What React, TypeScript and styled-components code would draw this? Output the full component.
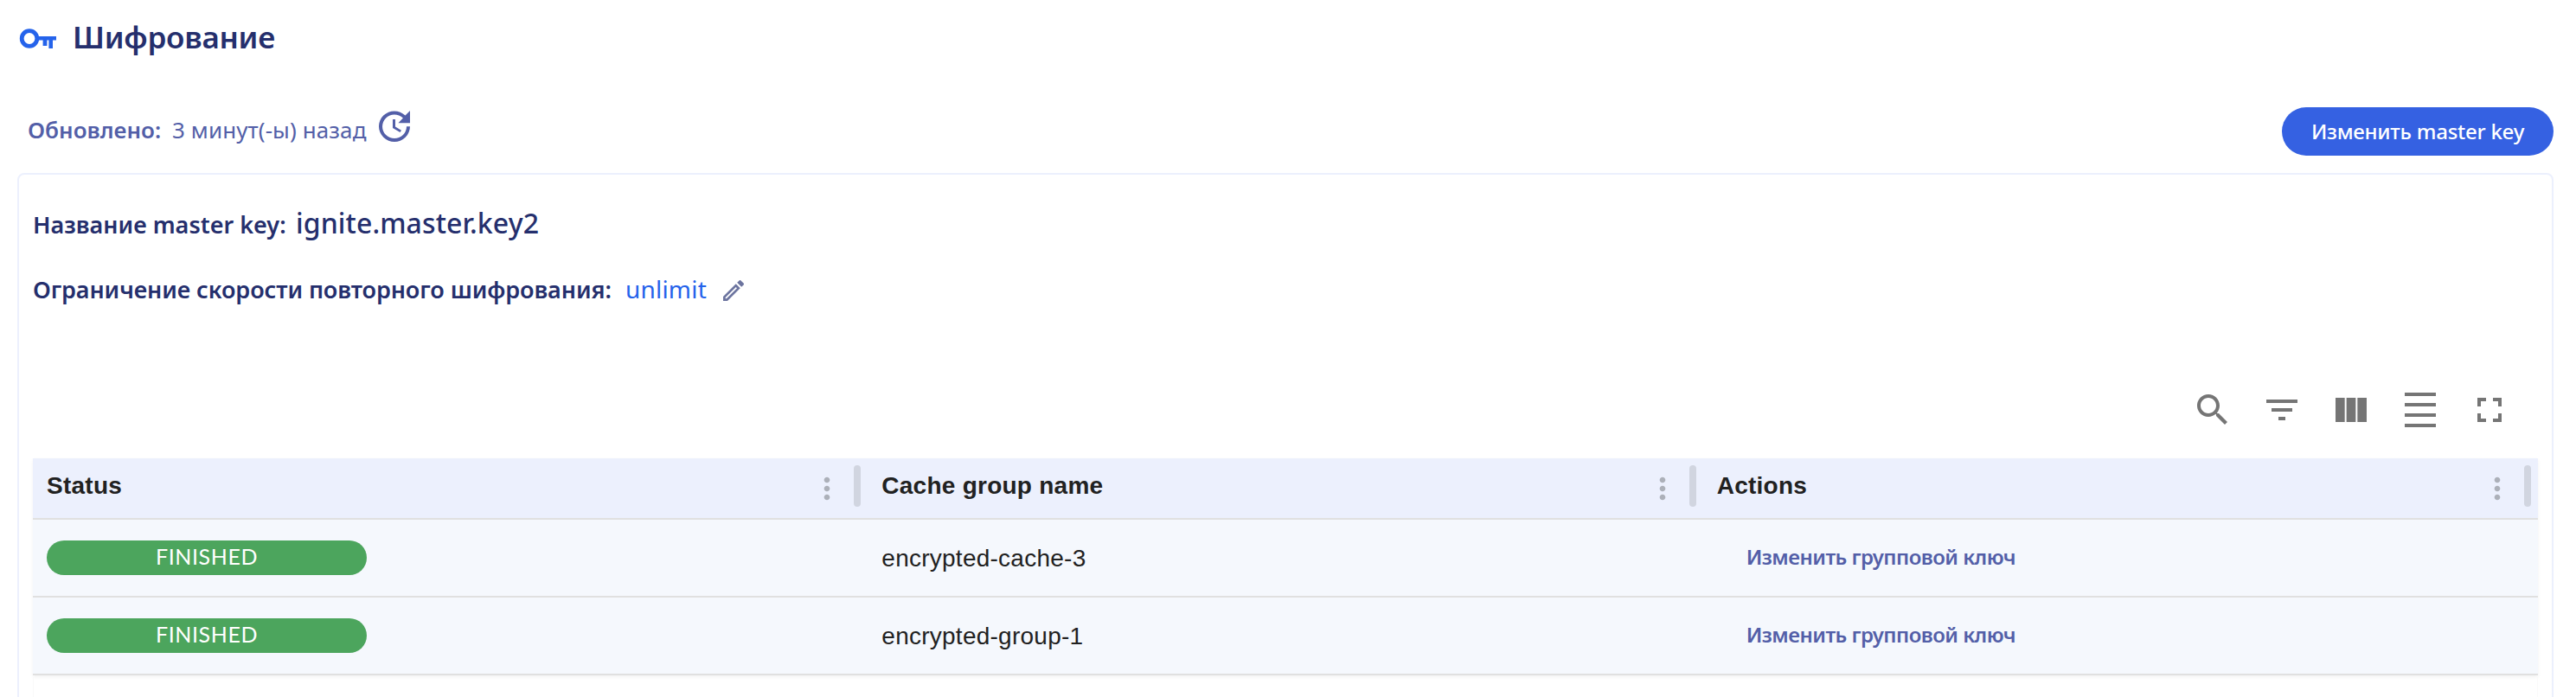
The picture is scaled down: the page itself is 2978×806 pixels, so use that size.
import React from "react";
import styled, { createGlobalStyle } from "styled-components";

const GlobalStyle = createGlobalStyle`
  *, *::before, *::after { box-sizing: border-box; }
  html, body { margin: 0; padding: 0; background: #fff; overflow: hidden; }
  svg { display: block; flex: none; }
`;

const navy = "#252f6d";
const slate = "#535fa8";
const brand = "'Noto Sans', 'Open Sans', sans-serif";

const Page = styled.main`
  display: flex;
  flex-direction: column;
  width: 2978px;
  height: 806px;
  overflow: hidden;
  padding: 0 26px 0 20px;
  font-family: ${brand};
`;

const TitleBar = styled.header`
  display: flex;
  flex: none;
  align-items: center;
  gap: 17px;
  height: 88px;
  padding-left: 2px;
`;

const Title = styled.h1`
  margin: 0 0 2px;
  font-size: 35px;
  font-weight: 600;
  line-height: 48px;
  letter-spacing: -0.25px;
  color: ${navy};
`;

const StatusBar = styled.div`
  display: flex;
  flex: none;
  justify-content: space-between;
  height: 112px;
  padding: 30px 0 0 12px;
`;

const Updated = styled.div`
  display: flex;
  height: 64px;
  line-height: 65px;
  font-size: 26px;
  color: ${slate};
`;

const UpdatedLabel = styled.span`
  width: 167px;
  font-weight: 600;
`;

const UpdatedValue = styled.span`
  width: 233px;
  letter-spacing: 0.1px;
`;

const UpdatedIcon = styled.span`
  padding-top: 4px;
`;

const PrimaryButton = styled.button`
  width: 314px;
  height: 56px;
  margin: 6px 0 0;
  padding: 0;
  border: 0;
  border-radius: 28px;
  background: #3561e2;
  color: #fff;
  font: 500 24px / 56px ${brand};
  letter-spacing: -0.25px;
`;

const Panel = styled.section`
  flex: 1 0 640px;
  display: flex;
  flex-direction: column;
  padding: 0 16px;
  border: 2px solid #ecf0fd;
  border-radius: 8px;
`;

const Property = styled.div<{ $top: number }>`
  display: flex;
  align-items: baseline;
  height: 48px;
  margin-top: ${(p) => p.$top}px;
  line-height: 48px;
  color: ${navy};
`;

const PropertyLabel = styled.span<{ $width: number; $tight?: boolean }>`
  width: ${(p) => p.$width}px;
  white-space: nowrap;
  font-size: 27px;
  font-weight: 600;
  letter-spacing: ${(p) => (p.$tight ? -0.1 : 0)}px;
`;

const KeyName = styled.span`
  font-size: 32px;
  font-weight: 500;
  letter-spacing: 0.1px;
`;

const Limit = styled.span`
  width: 109px;
  font-size: 28px;
  letter-spacing: 0.2px;
  color: #2563eb;
`;

const EditButton = styled.span`
  align-self: flex-start;
  padding-top: 10px;
`;

const Toolbar = styled.div`
  display: flex;
  justify-content: flex-end;
  gap: 32px;
  height: 80px;
  margin-top: 92px;
  padding-right: 32px;
`;

const Table = styled.div`
  display: flex;
  flex-direction: column;
  font-family: "Liberation Sans", Helvetica, Arial, sans-serif;
  font-size: 28px;
  color: #212121;
  box-shadow: 0 2px 4px rgba(0, 0, 0, 0.05);
`;

const HeadRow = styled.div`
  display: grid;
  grid-template-columns: repeat(3, 1fr);
  height: 71px;
  background: #ecf0fd;
  border-bottom: 2px solid #e0e0e0;
`;

const HeadCell = styled.div`
  display: flex;
  padding: 8px 8px 0 16px;
`;

const HeadText = styled.span`
  flex: 1;
  font-weight: 700;
  line-height: 48px;
  letter-spacing: 0.25px;
`;

const Grip = styled.span`
  width: 8px;
  height: 48px;
  margin-left: 7px;
  border-radius: 4px;
  background: #d1d5e0;
`;

const Row = styled.div`
  display: grid;
  grid-template-columns: repeat(3, 1fr);
  align-items: center;
  height: 90px;
  background: #f5f8fd;
  border-bottom: 2px solid #e0e0e0;
`;

const Cell = styled.div<{ $indent?: boolean }>`
  padding-left: ${(p) => (p.$indent ? 50 : 16)}px;
  line-height: 40px;
`;

const CacheName = styled.span`
  position: relative;
  top: 1px;
  letter-spacing: 0.25px;
`;

const StatusPill = styled.div`
  width: 370px;
  height: 40px;
  border-radius: 20px;
  background: #4ca55d;
  color: #fff;
  font: 400 25px / 36px Lato, ${brand};
  letter-spacing: 0.6px;
  text-align: center;
`;

const LinkButton = styled.span`
  display: block;
  padding-bottom: 3px;
  font: 600 24px / 38px ${brand};
  letter-spacing: -0.55px;
  color: ${slate};
`;

const Footer = styled.div`
  flex: 1;
  border: solid #fafafa;
  border-width: 0 1px;
`;

const KeyIcon = () => (
  <svg width="45" height="28" viewBox="0 0 45 28">
    <circle cx="12" cy="14.5" r="8.8" fill="none" stroke="#2563eb" strokeWidth="4.8" />
    <path d="M21 12h22v4.4h-4v9.6h-4.6v-9.6h-2v6.5h-4.8v-6.5H21z" fill="#2563eb" />
  </svg>
);

const paths = {
  update:
    "M21 10.12h-6.78l2.74-2.82c-2.73-2.7-7.15-2.8-9.88-.1-2.73 2.71-2.73 7.08 0 9.79s7.15 2.71 9.88 0C18.32 15.65 19 14.08 19 12.1h2c0 1.98-.88 4.55-2.64 6.29-3.51 3.48-9.21 3.48-12.72 0-3.5-3.47-3.53-9.11-.02-12.58s9.14-3.47 12.65 0L21 3v7.12zM12.5 8v4.25l3.5 2.08-.72 1.21L11 13V8h1.5z",
  edit:
    "m14.06 9.02.92.92L5.92 19H5v-.92l9.06-9.06M17.66 3c-.25 0-.51.1-.7.29l-1.83 1.83 3.75 3.75 1.83-1.83c.39-.39.39-1.02 0-1.41l-2.34-2.34c-.2-.2-.45-.29-.71-.29zm-3.6 3.19L3 17.25V21h3.75L17.81 9.94l-3.75-3.75z",
  search:
    "M15.5 14h-.79l-.28-.27C15.41 12.59 16 11.11 16 9.5 16 5.91 13.09 3 9.5 3S3 5.91 3 9.5 5.91 16 9.5 16c1.61 0 3.09-.59 4.23-1.57l.27.28v.79l5 4.99L20.49 19l-4.99-5zm-6 0C7.01 14 5 11.99 5 9.5S7.01 5 9.5 5 14 7.01 14 9.5 11.99 14 9.5 14z",
  filter: "M10 18h4v-2h-4v2zM3 6v2h18V6H3zm3 7h12v-2H6v2z",
  columns:
    "M14.67 5v14H9.33V5h5.34zm1 14H21V5h-5.33v14zm-7.34 0V5H3v14h5.33z",
  density: "M3 2h18v2H3zm0 18h18v2H3zm0-6h18v2H3zm0-6h18v2H3z",
  fullscreen:
    "M7 14H5v5h5v-2H7v-3zm-2-4h2V7h3V5H5v5zm12 7h-3v2h5v-5h-2v3zM14 5v2h3v3h2V5h-5z",
  more:
    "M12 8c1.1 0 2-.9 2-2s-.9-2-2-2-2 .9-2 2 .9 2 2 2zm0 2c-1.1 0-2 .9-2 2s.9 2 2 2 2-.9 2-2-.9-2-2-2zm0 6c-1.1 0-2 .9-2 2s.9 2 2 2 2-.9 2-2-.9-2-2-2z",
};

const Icon = ({
  name,
  size = 48,
  color = "#757575",
}: {
  name: keyof typeof paths;
  size?: number;
  color?: string;
}) => (
  <svg width={size} height={size} viewBox="0 0 24 24" fill={color}>
    <path d={paths[name]} />
  </svg>
);

const columns = ["Status", "Cache group name", "Actions"];
const groups = ["encrypted-cache-3", "encrypted-group-1"];
const tools = ["search", "filter", "columns", "density", "fullscreen"] as const;

const MoreBox = styled.span`
  width: 40px;
  padding-top: 7px;
  margin-right: 4px;
`;

export default function App() {
  return (
    <Page>
      <GlobalStyle />
      <TitleBar>
        <KeyIcon />
        <Title>Шифрование</Title>
      </TitleBar>
      <StatusBar>
        <Updated>
          <UpdatedLabel>Обновлено:</UpdatedLabel>
          <UpdatedValue>3 минут(-ы) назад</UpdatedValue>
          <UpdatedIcon>
            <Icon name="update" color={slate} />
          </UpdatedIcon>
        </Updated>
        <PrimaryButton>Изменить master key</PrimaryButton>
      </StatusBar>
      <Panel>
        <Property $top={32}>
          <PropertyLabel $width={304}>Название master key:</PropertyLabel>
          <KeyName>ignite.master.key2</KeyName>
        </Property>
        <Property $top={28}>
          <PropertyLabel $width={685} $tight>
            Ограничение скорости повторного шифрования:
          </PropertyLabel>
          <Limit>unlimit</Limit>
          <EditButton>
            <Icon name="edit" size={32} color="#6c749f" />
          </EditButton>
        </Property>
        <Toolbar>
          {tools.map((t) => (
            <Icon key={t} name={t} />
          ))}
        </Toolbar>
        <Table>
          <HeadRow>
            {columns.map((c) => (
              <HeadCell key={c}>
                <HeadText>{c}</HeadText>
                <MoreBox>
                  <Icon name="more" size={40} color="#acb0b9" />
                </MoreBox>
                <Grip />
              </HeadCell>
            ))}
          </HeadRow>
          {groups.map((g) => (
            <Row key={g}>
              <Cell>
                <StatusPill>FINISHED</StatusPill>
              </Cell>
              <Cell>
                <CacheName>{g}</CacheName>
              </Cell>
              <Cell $indent>
                <LinkButton>Изменить групповой ключ</LinkButton>
              </Cell>
            </Row>
          ))}
        </Table>
        <Footer />
      </Panel>
    </Page>
  );
}
